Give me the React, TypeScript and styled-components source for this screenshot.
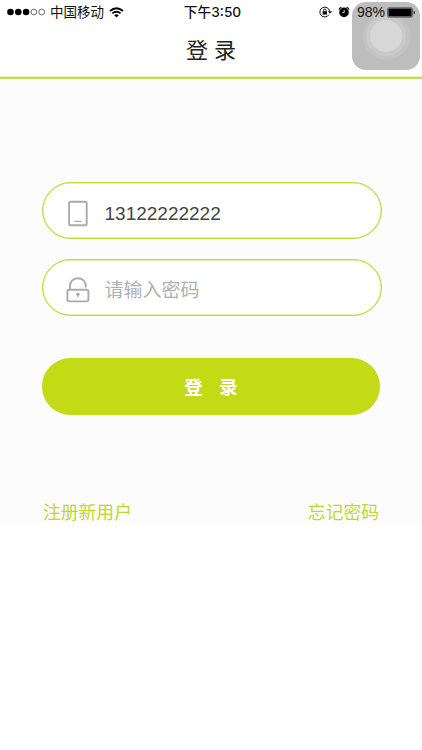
import React from "react";
import styled, { createGlobalStyle } from "styled-components";

const lime = "#c3da17";

const GlobalStyle = createGlobalStyle`
  * { box-sizing: border-box; }
  body { margin: 0; background: #fff; font-family: "Liberation Sans", "Noto Sans CJK SC", sans-serif; }
`;

const Screen = styled.div`
  position: relative;
  width: 422px;
  height: 750px;
  overflow: hidden;
  background: #fff;
`;

const Header = styled.header`
  height: 79px;
  border-bottom: 2px solid #c5dc4e;
  box-shadow: inset 0 -1px 0 #eaf2bd;
`;

const StatusBar = styled.div`
  position: relative;
  z-index: 2;
  display: grid;
  grid-template-columns: 160px 105px 1fr;
  align-items: center;
  height: 24px;
  color: #111;
`;

const StatusGroup = styled.div<{ $start: number }>`
  display: flex;
  align-items: center;
  height: 24px;
  padding-left: ${(p) => p.$start}px;
`;

const StatusIcons = styled.div`
  display: flex;
  gap: 5px;
`;

const Carrier = styled.span`
  margin: 0 5px 0 4px;
  padding-bottom: 2px;
  font: 400 13.5px/22px "Noto Sans CJK SC", sans-serif;
  white-space: nowrap;
`;

const Time = styled.span`
  font: 500 13.7px/24px "Inter", "Noto Sans CJK SC", sans-serif;
  text-align: center;
  white-space: nowrap;
`;

const Percent = styled.span`
  width: 29px;
  margin: 0 1px 0 7px;
  font-size: 14px;
  line-height: 24px;
`;

const Title = styled.h1`
  margin: 0;
  height: 52px;
  color: #222;
  font: 400 22px/48px "Noto Sans CJK SC", sans-serif;
  text-align: center;
  word-spacing: 1px;
`;

const AssistiveButton = styled.div`
  position: absolute;
  z-index: 1;
  top: 2px;
  left: 352px;
  display: grid;
  place-items: center;
  width: 68px;
  height: 68px;
  border-radius: 14px;
  background: #bdbdbd;
`;

const AssistiveRing = styled.span<{ $size: number; $tone: string }>`
  display: grid;
  place-items: center;
  width: ${(p) => p.$size}px;
  height: ${(p) => p.$size}px;
  border-radius: 50%;
  background: ${(p) => p.$tone};
`;

const Form = styled.form`
  display: flex;
  flex-direction: column;
  height: 444px;
  padding: 103px 40px 0 42px;
  background: #fcfcfc;
`;

const Field = styled.label`
  display: flex;
  flex-shrink: 0;
  align-items: center;
  height: 57px;
  margin-bottom: 20px;
  padding: 4px 0 0 22px;
  border: 1px solid #c0da35;
  border-radius: 29px;
  background: #fff;
  box-shadow: inset 0 0 0 0.5px #cde060;
`;

const Input = styled.input`
  width: 240px;
  height: 40px;
  margin-left: 13.5px;
  padding: 3px 0 0;
  border: 0;
  outline: 0;
  background: transparent;
  color: #444;
  font: 400 19px "Liberation Sans", "Noto Sans CJK SC", sans-serif;
  &::placeholder { color: #b0b0b0; opacity: 1; }
`;

const Submit = styled.button`
  flex-shrink: 0;
  width: 338px;
  height: 57px;
  margin-top: 22px;
  padding: 0;
  border: 0;
  border-radius: 29px;
  background: ${lime};
  color: #fff;
  font: 700 18.5px/57px "Noto Sans CJK SC", sans-serif;
  white-space: pre;
  word-spacing: 4px;
`;

const Links = styled.nav`
  display: flex;
  flex-shrink: 0;
  justify-content: space-between;
  margin: 84px 3px 0 1px;
`;

const Link = styled.a`
  color: #bfd730;
  font: 400 17.8px/24px "Noto Sans CJK SC", sans-serif;
`;

const SignalDots = () => (
  <svg width="39" height="10" viewBox="0 0 39 10">
    {[3.5, 11.3, 19.1].map((x) => <circle key={x} cx={x} cy="5" r="3.3" fill="#000" />)}
    {[26.9, 34.7].map((x) => <circle key={x} cx={x} cy="5" r="2.9" fill="none" stroke="#333" strokeWidth=".7" />)}
  </svg>
);

const Wifi = () => (
  <svg width="15" height="11" viewBox="0 0 15 11" fill="none" stroke="#000" strokeWidth="1.8">
    <path d="M1 4Q7.5-1.6 14 4" />
    <path d="M3.4 6.4Q7.5 3 11.6 6.4" />
    <path d="M5.2 8.2Q7.5 6.4 9.8 8.2L7.5 10.6Z" fill="#000" stroke="none" />
  </svg>
);

const RotationLock = () => (
  <svg width="14" height="12" viewBox="0 0 14 12" fill="none" stroke="#111">
    <path d="M9.9 8.7A4.9 4.9 0 1 1 10.6 5.2" strokeWidth="1" />
    <path d="M8.9 5.2h4.1l-2 2.6z" fill="#111" stroke="none" />
    <rect x="3.6" y="5.2" width="4.4" height="3.4" fill="#111" stroke="none" />
    <path d="M4.5 5.5V4.3a1.3 1.3 0 0 1 2.6 0v1.2" strokeWidth=".9" />
  </svg>
);

const Alarm = () => (
  <svg width="12" height="12" viewBox="0 0 12 12">
    <circle cx="6" cy="6.4" r="4.8" fill="#000" />
    <path d="M1.1 3.6Q1.4 1.6 3.4 1.3M8.6 1.3Q10.6 1.6 10.9 3.6" fill="none" stroke="#000" strokeWidth="1.3" />
    <path d="M6.2 3.9v2.7H4.2" fill="none" stroke="#fff" strokeWidth=".8" />
  </svg>
);

const Battery = () => (
  <svg width="29" height="11" viewBox="0 0 29 11">
    <rect x=".5" y=".7" width="25" height="9.6" rx="1.5" fill="none" stroke="#333" strokeWidth=".6" />
    <rect x="1.4" y="1.6" width="23.2" height="7.8" rx=".7" fill="#000" />
    <path d="M26.6 3.7q1.3.2 1.3 1.8t-1.3 1.8z" fill="#111" />
  </svg>
);

const Tablet = () => (
  <svg width="26" height="28" viewBox="0 0 26 28" fill="none" stroke="#aaa">
    <rect x="4.1" y="2.8" width="17.6" height="23.4" rx="1" strokeWidth="1.9" />
    <path d="M9.3 22.3h7.3" strokeWidth="1.2" />
  </svg>
);

const Padlock = () => (
  <svg width="26" height="28" viewBox="0 0 26 28" fill="none" stroke="#aaa" strokeWidth="1.9">
    <rect x="2.4" y="13.8" width="21" height="11.6" rx="1.8" />
    <path d="M5 14V9.8a7.9 7.6 0 0 1 15.8 0v1.8" />
    <circle cx="12.9" cy="18.2" r="1.7" fill="#aaa" stroke="none" />
    <path d="M12.9 18v3.8" strokeWidth="1.1" />
  </svg>
);

export default function App() {
  return (
    <Screen>
      <GlobalStyle />
      <Header>
        <StatusBar>
          <StatusGroup $start={7}>
            <SignalDots />
            <Carrier>中国移动</Carrier>
            <Wifi />
          </StatusGroup>
          <Time>下午3:50</Time>
          <StatusGroup $start={54}>
            <StatusIcons>
              <RotationLock />
              <Alarm />
            </StatusIcons>
            <Percent>98%</Percent>
            <Battery />
          </StatusGroup>
        </StatusBar>
        <Title>登 录</Title>
      </Header>
      <AssistiveButton>
        <AssistiveRing $size={47} $tone="#c3c3c3">
          <AssistiveRing $size={40} $tone="#cacaca">
            <AssistiveRing $size={32} $tone="#d7d7d7" />
          </AssistiveRing>
        </AssistiveRing>
      </AssistiveButton>
      <Form>
        <Field>
          <Tablet />
          <Input defaultValue="13122222222" />
        </Field>
        <Field>
          <Padlock />
          <Input type="password" placeholder="请输入密码" />
        </Field>
        <Submit type="button">登  录</Submit>
        <Links>
          <Link>注册新用户</Link>
          <Link>忘记密码</Link>
        </Links>
      </Form>
    </Screen>
  );
}
